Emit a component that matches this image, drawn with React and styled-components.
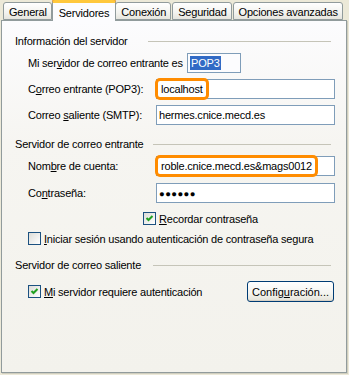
import React from 'react'
import styled, { createGlobalStyle } from 'styled-components'

const GlobalStyle = createGlobalStyle`
  html, body {
    margin: 0;
    padding: 0;
    background: #ECE9D8;
  }
  body {
    font-family: "Liberation Sans", Arial, sans-serif;
    font-size: 11px;
    letter-spacing: -0.2px;
    color: #000;
  }
`

const tabs = ['General', 'Servidores', 'Conexión', 'Seguridad', 'Opciones avanzadas']

const App = () => {
  return (
    <Window>
      <GlobalStyle />
      <TabStrip>
        {tabs.map((t) => (
          <Tab key={t} $active={t === 'Servidores'}>{t}</Tab>
        ))}
      </TabStrip>

      <Panel>
        <Heading $text={133}><span>Información del servidor</span></Heading>

        <Row $top={5}>
          <Label $width={159}>Mi ser<u>v</u>idor de correo entrante es</Label>
          <SmallBox><Selected>POP3</Selected></SmallBox>
        </Row>
        <Row $top={6}>
          <Label>C<u>o</u>rreo entrante (POP3):</Label>
          <Field><Highlight>localhost</Highlight></Field>
        </Row>
        <Row $top={6}>
          <Label>Correo <u>s</u>aliente (SMTP):</Label>
          <Field><Value>hermes.cnice.mecd.es</Value></Field>
        </Row>

        <Heading $text={138} $top={12}><span>Servidor de correo entrante</span></Heading>

        <Row $top={5}>
          <Label>Nom<u>b</u>re de cuenta:</Label>
          <Field><Highlight>roble.cnice.mecd.es&amp;mags0012</Highlight></Field>
        </Row>
        <Row $top={7}>
          <Label>Co<u>n</u>traseña:</Label>
          <Field><Dots>●●●●●●</Dots></Field>
        </Row>

        <CheckRow $top={9} $indent={128}>
          <CheckBox checked />
          <span><u>R</u>ecordar contraseña</span>
        </CheckRow>
        <CheckRow $top={7}>
          <CheckBox />
          <span><u>I</u>niciar sesión usando autenticación de contraseña segura</span>
        </CheckRow>

        <Heading $text={138} $top={13}><span>Servidor de correo saliente</span></Heading>

        <ButtonRow>
          <CheckRow>
            <CheckBox checked />
            <span><u>M</u>i servidor requiere autenticación</span>
          </CheckRow>
          <Button>Config<u>u</u>ración...</Button>
        </ButtonRow>
      </Panel>
    </Window>
  )
}

const CheckBox = ({ checked }) => (
  <Box>
    {checked && (
      <svg width="9" height="9" viewBox="0 0 9 9">
        <path d="M1.5 4 L3.5 6 L7.5 2" fill="none" stroke="#21A121" strokeWidth="2" />
      </svg>
    )}
  </Box>
)

const Window = styled.div`
  width: 349px;
  height: 375px;
  box-sizing: border-box;
  padding-left: 1px;
  background: #ECE9D8;
  overflow: hidden;
`

const TabStrip = styled.div`
  display: flex;
  align-items: flex-end;
  height: 20px;
  padding-left: 2px;
  position: relative;
  z-index: 1;
`

const Tab = styled.div`
  box-sizing: border-box;
  height: ${(p) => (p.$active ? '21px' : '18px')};
  margin: 0 ${(p) => (p.$active ? '-1px' : '1px')} ${(p) => (p.$active ? '-1px' : '0')} ${(p) => (p.$active ? '-1px' : '0')};
  padding: ${(p) => (p.$active ? '2px 6px 0' : '2px 4px 0 5px')};
  display: flex;
  align-items: center;
  border: 1px solid #919B9C;
  border-bottom: ${(p) => (p.$active ? 'none' : '1px solid #919B9C')};
  border-top: ${(p) => (p.$active ? '3px solid #FFC83C' : '1px solid #919B9C')};
  border-radius: 3px 3px 0 0;
  background: ${(p) => (p.$active ? '#FCFCFE' : 'linear-gradient(#FFFFFF, #F3F3EF 60%, #E6E5DE)')};
  box-shadow: ${(p) => (p.$active ? '0 -1px 0 #E68B2C' : 'none')};
  position: relative;
  z-index: ${(p) => (p.$active ? 2 : 1)};
  white-space: nowrap;
`

const Panel = styled.div`
  width: 346px;
  height: 353px;
  box-sizing: border-box;
  border: 1px solid #919B9C;
  background: linear-gradient(#FCFCFE, #F6F5F1 35%, #F3F2EC);
  padding: 13px 11px 0 13px;
  box-shadow: 1px 1px 0 #D0CEBF;
`

const Heading = styled.div`
  display: flex;
  align-items: center;
  height: 14px;
  margin-top: ${(p) => p.$top || 0}px;

  span {
    width: ${(p) => p.$text}px;
    white-space: nowrap;
  }

  &::after {
    content: '';
    flex: 1;
    height: 1px;
    margin-right: 4px;
    background: #C5C4B8;
  }
`

const Row = styled.div`
  display: flex;
  align-items: center;
  height: 20px;
  margin-top: ${(p) => p.$top || 0}px;
  padding-left: 13px;
`

const Label = styled.div`
  width: ${(p) => p.$width || 128}px;
  white-space: nowrap;
`

const Field = styled.div`
  flex: 1;
  height: 20px;
  box-sizing: border-box;
  border: 1px solid #7F9DB9;
  background: #FFF;
  display: flex;
  align-items: center;
`

const SmallBox = styled(Field)`
  flex: none;
  width: 54px;
  padding-left: 2px;
  background: #FCFCFE;
`

const Selected = styled.span`
  background: #316AC5;
  color: #FFF;
  line-height: 14px;
  padding: 0 1px;
`

const Value = styled.span`
  padding-left: 2px;
  white-space: nowrap;
`

const Highlight = styled.span`
  height: 22px;
  box-sizing: border-box;
  margin-left: -2px;
  padding: 0 3px;
  border: 3px solid #FF8C00;
  border-radius: 5px;
  display: flex;
  align-items: center;
  white-space: nowrap;
  background: #FFF;
`

const Dots = styled.span`
  padding-left: 2px;
  font-size: 9.5px;
  letter-spacing: 0.4px;
`

const CheckRow = styled.div`
  display: flex;
  align-items: center;
  gap: 3px;
  height: 13px;
  margin-top: ${(p) => p.$top || 0}px;
  padding-left: ${(p) => p.$indent || 13}px;
  white-space: nowrap;
`

const Box = styled.span`
  width: 13px;
  height: 13px;
  box-sizing: border-box;
  border: 1px solid #1C5180;
  background: linear-gradient(135deg, #DCDCD7, #FFFFFF);
  display: inline-flex;
  align-items: center;
  justify-content: center;
  flex: none;
`

const ButtonRow = styled.div`
  display: flex;
  align-items: center;
  justify-content: space-between;
  height: 21px;
  margin-top: 9px;
  padding-right: 1px;
`

const Button = styled.button`
  width: 87px;
  height: 21px;
  padding: 0;
  font: inherit;
  color: #000;
  border: 1px solid #003C74;
  border-radius: 3px;
  background: linear-gradient(#FFFFFF, #F4F4F0 60%, #E3E1D7);
  box-shadow: inset 0 -1px 0 #D6D0C5;
`

export default App
